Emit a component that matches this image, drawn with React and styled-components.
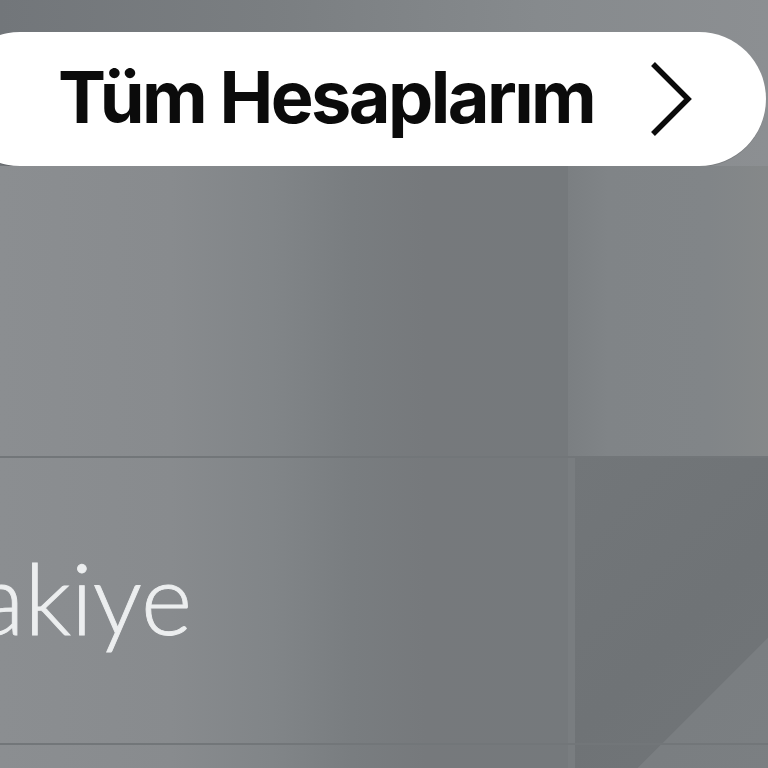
import React from "react";
import styled, { createGlobalStyle } from "styled-components";

const GlobalStyle = createGlobalStyle`
  html, body { margin: 0; padding: 0; background: #7d8184; overflow: hidden; }
  * { box-sizing: border-box; }
`;

const Screen = styled.div`
  width: 768px;
  height: 768px;
  overflow: hidden;
  display: flex;
  flex-direction: column;
  font-family: "Inter", "Liberation Sans", sans-serif;
`;

const Header = styled.header`
  flex: none;
  padding-top: 32px;
  background: linear-gradient(90deg, #72767a 0%, #7a7e81 35%, #868a8d 70%, #8c8f92 100%);
`;

const Pill = styled.button`
  all: unset;
  box-sizing: border-box;
  margin-left: -47px;
  width: 813px;
  height: 134px;
  display: flex;
  align-items: center;
  justify-content: space-between;
  padding: 0 74px 0 105px;
  background: #ffffff;
  border-radius: 67px;
  box-shadow: 0 1px 0 rgba(0, 0, 0, 0.12);
  cursor: pointer;
`;

const PillLabel = styled.span`
  font-family: "Inter", "Liberation Sans", sans-serif;
  font-weight: 700;
  font-size: 72px;
  line-height: 1;
  letter-spacing: -2.6px;
  color: #0b0b0b;
  white-space: nowrap;
  transform: translateY(-2px);
`;

const Chevron = styled.svg`
  flex: none;
  width: 44px;
  height: 80px;
`;

const Section = styled.section`
  flex: none;
  height: ${(p) => p.$h}px;
  display: grid;
  grid-template-columns: 568px 1fr;
  border-top: ${(p) => (p.$line ? "2px solid rgba(60, 64, 68, 0.16)" : "none")};
`;

const LeftCell = styled.div`
  display: flex;
  justify-content: flex-end;
  align-items: flex-start;
  padding-top: ${(p) => p.$pt || 0}px;
  background: linear-gradient(
    90deg,
    #8b8e91 0%,
    #888b8e 30%,
    #818588 48%,
    #797d80 62%,
    #76797c 75%,
    #75797c 100%
  );
`;

const LabelBox = styled.div`
  width: 192px;
  margin-right: auto;
  display: flex;
  justify-content: flex-end;
`;

const BalanceLabel = styled.span`
  font-family: "Lato", "Open Sans", sans-serif;
  font-weight: 300;
  font-size: 98px;
  line-height: 1;
  color: #eceeef;
  -webkit-text-stroke: 0.9px #eceeef;
  white-space: nowrap;
`;

const RightCell = styled.div`
  background: ${(p) => p.$bg};
`;

export default function App() {
  return (
    <>
      <GlobalStyle />
      <Screen>
        <Header>
          <Pill type="button">
            <PillLabel>Tüm Hesaplarım</PillLabel>
            <Chevron viewBox="0 0 44 80" aria-hidden="true">
              <path
                d="M5 5 L40 40 L5 75"
                fill="none"
                stroke="#0b0b0b"
                strokeWidth="5.5"
                strokeLinejoin="miter"
              />
            </Chevron>
          </Pill>
        </Header>

        <Section $h={290}>
          <LeftCell />
          <RightCell $bg="linear-gradient(90deg, #7b7f82 0%, #808487 20%, #818588 70%, #858889 100%)" />
        </Section>

        <Section $h={287} $line>
          <LeftCell $pt={90}>
            <LabelBox>
              <BalanceLabel>Bakiye</BalanceLabel>
            </LabelBox>
          </LeftCell>
          <RightCell $bg="linear-gradient(90deg, #797d80 0px, #797d80 7px, transparent 7px), linear-gradient(135deg, #727679 0px, #6f7376 200px, #707477 268px, #7a7e81 269px, #7b7f82 100%)" />
        </Section>

        <Section $h={40} $line>
          <LeftCell />
          <RightCell $bg="linear-gradient(90deg, #797d80 0px, #797d80 7px, transparent 7px), linear-gradient(135deg, #6f7376 0px, #707477 65px, #7a7e81 66px, #7b7f82 100%)" />
        </Section>
      </Screen>
    </>
  );
}
